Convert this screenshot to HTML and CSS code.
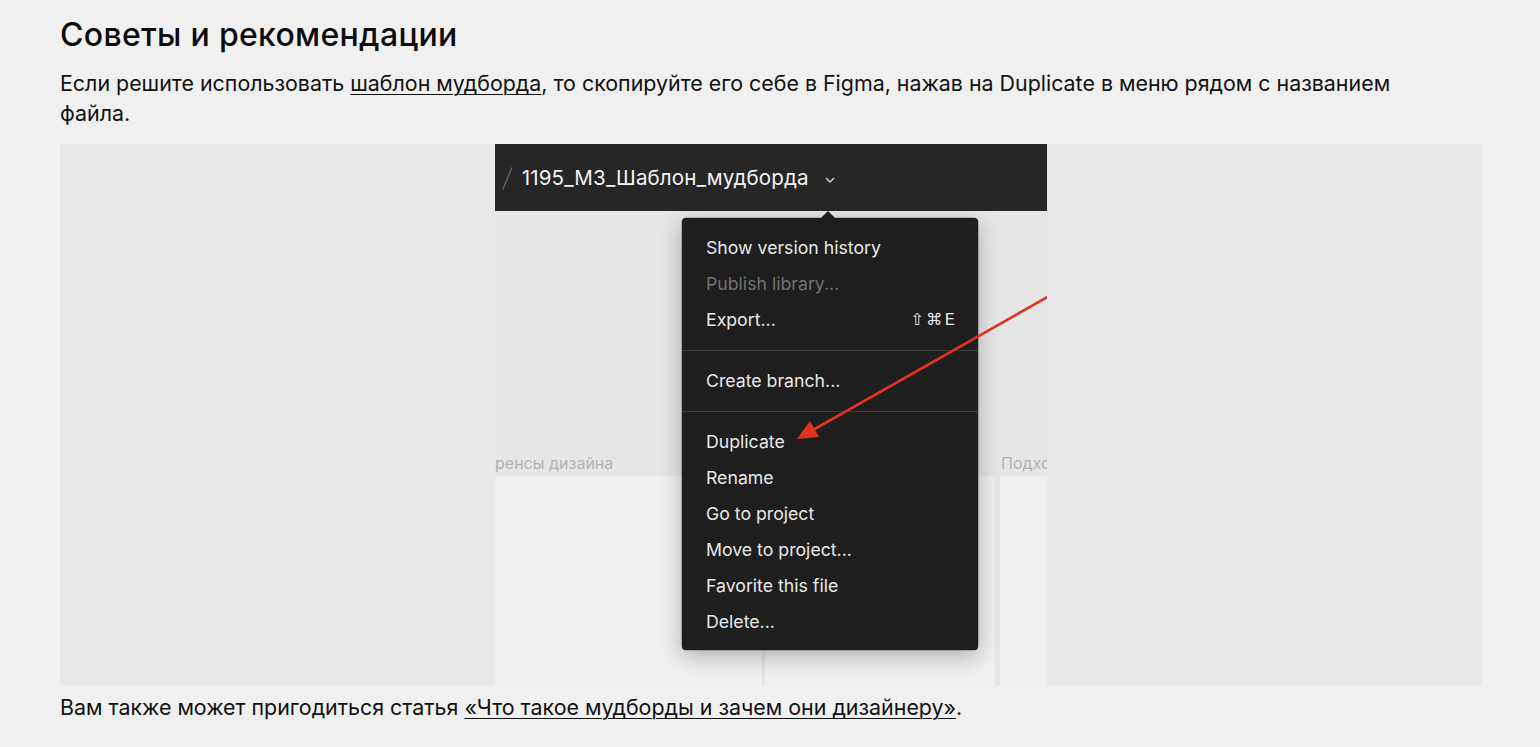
FILE: index.html
```html
<!DOCTYPE html>
<html lang="ru">
<head>
<meta charset="utf-8">
<title>Советы и рекомендации</title>
<link rel="stylesheet" href="styles.css">
</head>
<body>
<main class="article">
  <h2 class="title">Советы и рекомендации</h2>
  <p class="text">Если решите использовать <a class="link" href="#">шаблон мудборда</a>, то скопируйте его себе в Figma, нажав на Duplicate в меню рядом с названием файла.</p>
  <figure class="figure">
    <div class="shot">
      <div class="shot-bar">
        <span class="slash">/</span>
        <span class="file-name">1195_М3_Шаблон_мудборда</span>
        <svg class="chevron" width="10" height="6" viewBox="0 0 10 6"><polyline points="1,1 5,5 9,1" fill="none" stroke="#d8d8d8" stroke-width="1.4"/></svg>
      </div>
      <div class="shot-canvas">
        <div class="shot-labels">
          <span class="shot-label shot-label-a">ренсы дизайна</span>
          <span class="shot-label shot-label-b">Подход</span>
        </div>
        <div class="shot-cards">
          <div class="card card-a"></div>
          <div class="card card-b"></div>
          <div class="card card-c"></div>
        </div>
      </div>
      <div class="menu">
        <div class="menu-item">Show version history</div>
        <div class="menu-item menu-item-disabled">Publish library...</div>
        <div class="menu-item"><span>Export...</span><span class="shortcut">⇧⌘E</span></div>
        <div class="menu-sep"></div>
        <div class="menu-item">Create branch...</div>
        <div class="menu-sep"></div>
        <div class="menu-item">Duplicate</div>
        <div class="menu-item">Rename</div>
        <div class="menu-item">Go to project</div>
        <div class="menu-item">Move to project...</div>
        <div class="menu-item">Favorite this file</div>
        <div class="menu-item">Delete...</div>
      </div>
      <svg class="arrow" width="552" height="542" viewBox="0 0 552 542">
        <line x1="556" y1="151" x2="318" y2="286" stroke="#e0321f" stroke-width="2.6" stroke-linecap="round"/>
        <polygon points="302,295 324,293 315,277" fill="#e0321f"/>
      </svg>
    </div>
  </figure>
  <p class="text text-after">Вам также может пригодиться статья <a class="link" href="#">«Что такое мудборды и зачем они дизайнеру»</a>.</p>
</main>
</body>
</html>
```

FILE: styles.css
```css
html, body {
  margin: 0;
  padding: 0;
  background: #f0f0f0;
}

body {
  font-family: Inter, "Noto Sans", "DejaVu Sans", sans-serif;
  color: #111;
}

.article {
  width: 1422px;
  padding: 17px 0 0 60px;
}

.title {
  margin: 0;
  font-size: 32px;
  line-height: 36px;
  font-weight: 500;
  letter-spacing: 0.3px;
  color: #0c0c0c;
}

.text {
  margin: 15px 0 0;
  max-width: 1400px;
  font-size: 21.4px;
  line-height: 30px;
  font-weight: 400;
}

.link {
  color: inherit;
  text-decoration: underline;
  text-decoration-thickness: 1px;
  text-underline-offset: 3px;
}

.figure {
  margin: 16px 0 0;
  height: 542px;
  background: #e8e8ea;
  display: flex;
  justify-content: center;
}

.text-after {
  margin-top: 6px;
}

/* screenshot */
.shot {
  position: relative;
  width: 552px;
  height: 542px;
  overflow: hidden;
  display: flex;
  flex-direction: column;
  background: #e6e6e6;
}

.shot-bar {
  height: 67px;
  flex: none;
  background: #262626;
  display: flex;
  align-items: center;
  padding-left: 8px;
  color: #f0f0f0;
}

.slash {
  font-size: 26px;
  font-weight: 200;
  color: #707070;
  margin-right: 10px;
  transform: skewX(-8deg);
}

.file-name {
  font-size: 20.6px;
  letter-spacing: 0.1px;
  color: #f2f2f2;
}

.chevron {
  margin-left: 16px;
  margin-top: 5px;
}

.shot-canvas {
  flex: 1;
  display: flex;
  flex-direction: column;
}

.shot-labels {
  height: 265px;
  display: flex;
  align-items: flex-end;
  padding-bottom: 3px;
  box-sizing: border-box;
  font-size: 16px;
  color: #b2b2b2;
  white-space: nowrap;
}

.shot-label-a {
  flex: none;
  width: 506px;
}

.shot-label-b {
  flex: none;
}

.shot-cards {
  flex: 1;
  display: flex;
  gap: 3px;
  background: #e6e6e6;
}

.card {
  background: #efefef;
}

.card-a {
  width: 267px;
}

.card-b {
  width: 230px;
  margin-right: 2px;
}

.card-c {
  flex: 1;
}

/* menu */
.menu {
  position: absolute;
  left: 187px;
  top: 74px;
  width: 296px;
  box-sizing: border-box;
  padding: 12px 0 10px;
  background: #1e1e1e;
  border-radius: 4px;
  box-shadow: 0 6px 22px rgba(0, 0, 0, 0.28), 0 0 0 0.5px rgba(0, 0, 0, 0.4);
  color: #e8e8e8;
  font-size: 17.7px;
}

.menu::before {
  content: "";
  position: absolute;
  top: -7px;
  left: 139px;
  border-left: 7px solid transparent;
  border-right: 7px solid transparent;
  border-bottom: 7px solid #1e1e1e;
}

.menu-item {
  height: 36px;
  line-height: 36px;
  padding: 0 23px 0 24px;
  display: flex;
  justify-content: space-between;
  white-space: nowrap;
}

.menu-item-disabled {
  color: #727272;
}

.shortcut {
  font-family: "DejaVu Sans", Inter, sans-serif;
  font-size: 16.5px;
  letter-spacing: 2px;
  margin-right: -2px;
}

.menu-sep {
  height: 1px;
  margin: 12px 0;
  background: #3b3b3b;
}

.arrow {
  position: absolute;
  left: 0;
  top: 0;
  pointer-events: none;
}
```
